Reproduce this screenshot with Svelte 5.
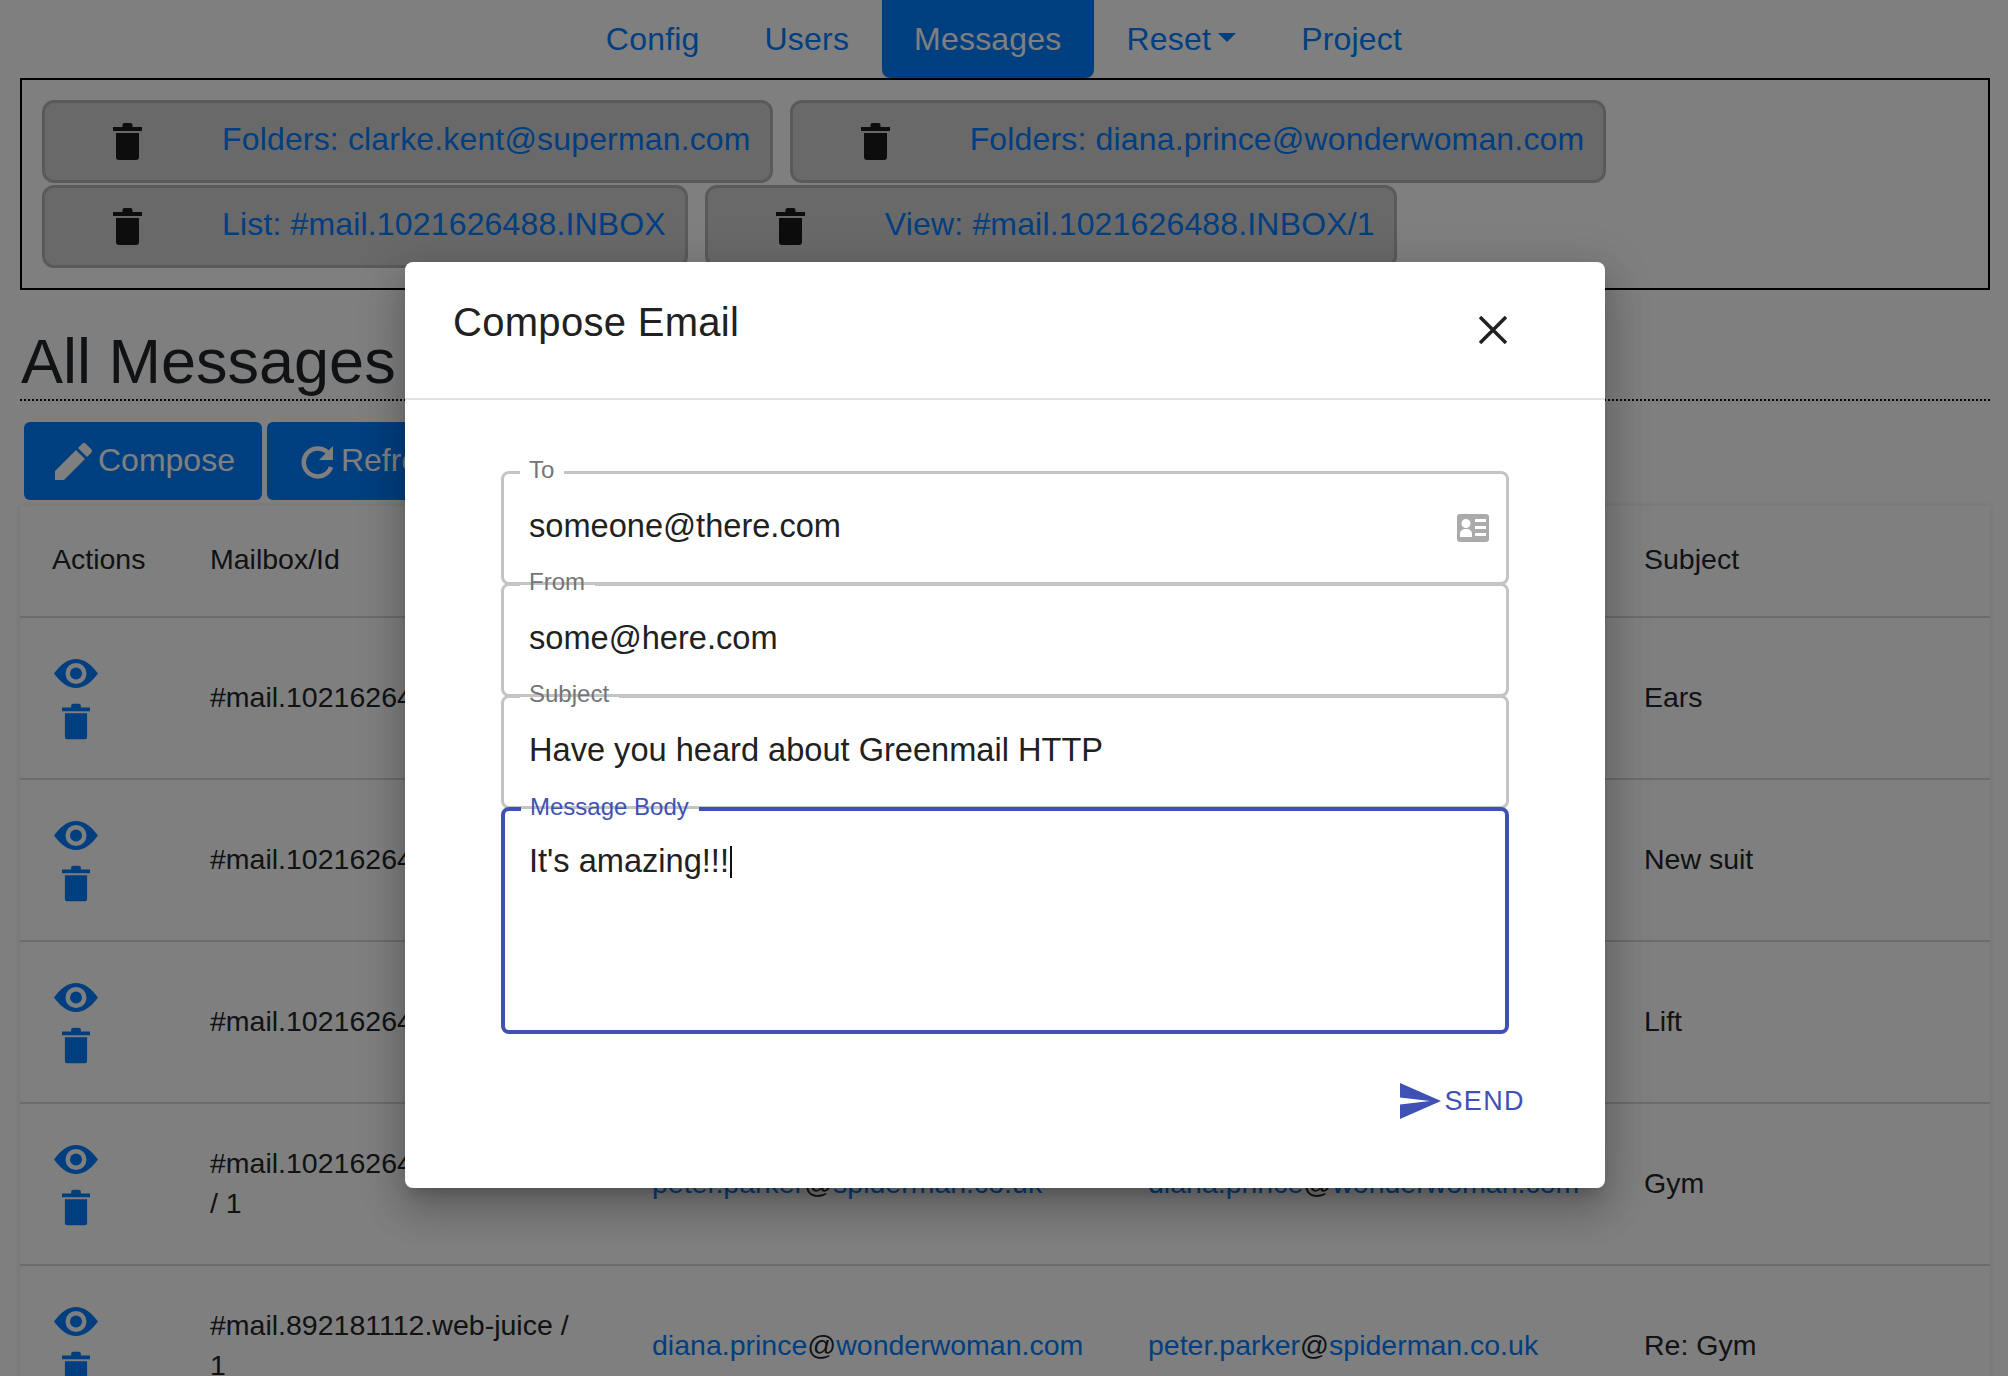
<script lang="ts">
	const tabs = [
		'Folders: clarke.kent@superman.com',
		'Folders: diana.prince@wonderwoman.com',
		'List: #mail.1021626488.INBOX',
		'View: #mail.1021626488.INBOX/1'
	];

	const peter = ['peter.parker', 'spiderman.co.uk'];
	const diana = ['diana.prince', 'wonderwoman.com'];
	const clarke = ['clarke.kent', 'superman.com'];

	const messages = [
		{ box: '#mail.1021626488.INBOX / 4', from: clarke, to: diana, subject: 'Ears' },
		{ box: '#mail.1021626488.INBOX / 3', from: clarke, to: diana, subject: 'New suit' },
		{ box: '#mail.1021626488.INBOX / 2', from: clarke, to: diana, subject: 'Lift' },
		{ box: '#mail.1021626488.web-juice / 1', from: peter, to: diana, subject: 'Gym' },
		{ box: '#mail.892181112.web-juice / 1', from: diana, to: peter, subject: 'Re: Gym' }
	];
</script>

{#snippet trash()}
	<svg class="trash" viewBox="0 0 29 37">
		<path d="M0 4h9.500V2a2 2 0 0 1 2-2h6a2 2 0 0 1 2 2v2H29v4H0z" />
		<path d="M3 10h23v24a3 3 0 0 1-3 3H6a3 3 0 0 1-3-3z" />
	</svg>
{/snippet}

{#snippet email(parts: string[])}
	<a href="#top" class="mail">{parts[0]}<span class="at">@</span>{parts[1]}</a>
{/snippet}

<div class="page">
	<nav class="nav">
		<a href="#top">Config</a>
		<a href="#top">Users</a>
		<a href="#top" class="active">Messages</a>
		<a href="#top" class="dropdown">Reset<span class="caret"></span></a>
		<a href="#top">Project</a>
	</nav>

	<div class="tabs">
		{#each tabs as tab}
			<div class="tab">
				{@render trash()}
				<a href="#top">{tab}</a>
			</div>
		{/each}
	</div>

	<h1>All Messages</h1>

	<div class="toolbar">
		<button class="btn">
			<svg class="btn-icon" viewBox="0 0 37 37">
				<path d="M0 37v-9L21 7l9 9L9 37z" />
				<path d="M23 5l4-4a3 3 0 0 1 4 0l5 5a3 3 0 0 1 0 4l-4 4z" />
			</svg>
			Compose
		</button>
		<button class="btn">
			<svg class="btn-icon" viewBox="0 0 37 37">
				<path d="M31 11A14 14 0 1 0 33 24" fill="none" stroke="currentColor" stroke-width="4.500" />
				<path d="M35 3v14H21z" />
			</svg>
			Refresh
		</button>
	</div>

	<table class="messages">
		<colgroup>
			<col style="width: 158px" />
			<col style="width: 442px" />
			<col style="width: 496px" />
			<col style="width: 496px" />
			<col />
		</colgroup>
		<thead>
			<tr>
				<th>Actions</th>
				<th>Mailbox/Id</th>
				<th>From</th>
				<th>To</th>
				<th>Subject</th>
			</tr>
		</thead>
		<tbody>
			{#each messages as msg}
				<tr>
					<td class="actions">
						<svg class="eye" viewBox="0 0 44 29">
							<path fill-rule="evenodd" d="M0 14.500C7 5 14 0 22 0s15 5 22 14.500C37 24 30 29 22 29S7 24 0 14.500zM22 4a10.500 10.500 0 1 0 0 21 10.500 10.500 0 0 0 0-21z" />
							<circle cx="22" cy="14.500" r="6" />
						</svg>
						{@render trash()}
					</td>
					<td>{msg.box}</td>
					<td>{@render email(msg.from)}</td>
					<td>{@render email(msg.to)}</td>
					<td>{msg.subject}</td>
				</tr>
			{/each}
		</tbody>
	</table>

	<div class="overlay">
		<div class="dialog">
			<header class="dialog-head">
				<h2>Compose Email</h2>
				<svg class="close" viewBox="0 0 28 28">
					<path d="M1 1l26 26M27 1L1 27" stroke="currentColor" stroke-width="3.500" fill="none" />
				</svg>
			</header>
			<div class="dialog-body">
				<fieldset class="field">
					<legend>To</legend>
					<input type="text" value="someone@there.com" />
					<svg class="card" viewBox="0 0 32 28">
						<path fill-rule="evenodd" d="M3 0h26a3 3 0 0 1 3 3v22a3 3 0 0 1-3 3H3a3 3 0 0 1-3-3V3a3 3 0 0 1 3-3zM18 5v3h11V5zM18 12v3h11v-3zM18 19v3h11v-3zM9 5a4.500 4.500 0 1 0 0 9 4.500 4.500 0 0 0 0-9zM3 23h12v-3c0-3-2-5-6-5s-6 2-6 5z" />
					</svg>
				</fieldset>
				<fieldset class="field">
					<legend>From</legend>
					<input type="text" value="some@here.com" />
				</fieldset>
				<fieldset class="field">
					<legend>Subject</legend>
					<input type="text" value="Have you heard about Greenmail HTTP" />
				</fieldset>
				<fieldset class="field focused">
					<legend>Message Body</legend>
					<div class="body-text">It's amazing!!!<span class="cursor"></span></div>
				</fieldset>
				<div class="dialog-actions">
					<button class="send">
						<svg class="send-icon" viewBox="0 0 41 36">
							<path d="M0 0l41 18L0 36V21.500L30 18 0 14.500z" />
						</svg>
						SEND
					</button>
				</div>
			</div>
		</div>
	</div>
</div>

<style>
	:global(body) {
		margin: 0;
		background: #fff;
	}

	.page {
		position: relative;
		height: 1376px;
		overflow: hidden;
		font-family: "Liberation Sans", Arial, sans-serif;
		color: #212529;
	}

	a {
		color: #007eff;
		text-decoration: none;
	}

	.nav {
		display: flex;
		justify-content: center;
		font-size: 32px;
		letter-spacing: 0.2px;
	}

	.nav a {
		display: flex;
		align-items: center;
		height: 78px;
		padding: 0 32.500px;
		border-radius: 0 0 8px 8px;
	}

	.nav a.active {
		background: #007eff;
		color: #fff;
	}

	.caret {
		width: 0;
		height: 0;
		margin-left: 7px;
		margin-bottom: 4px;
		border-top: 9px solid currentColor;
		border-left: 9px solid transparent;
		border-right: 9px solid transparent;
	}

	.tabs {
		display: flex;
		flex-wrap: wrap;
		align-content: flex-start;
		column-gap: 17px;
		row-gap: 2px;
		box-sizing: border-box;
		height: 212px;
		margin: 0 18px 0 20px;
		padding: 20px;
		border: 2px solid #000;
	}

	.tab {
		display: flex;
		align-items: center;
		gap: 80px;
		box-sizing: border-box;
		height: 83px;
		padding: 0 19px 5px 68px;
		background: #d3d3d3;
		border: 3px solid #b4b4b4;
		border-radius: 12px;
		font-size: 32px;
		letter-spacing: 0.16px;
	}

	.trash {
		flex: none;
		width: 29px;
		height: 37px;
		fill: currentColor;
	}

	.tab .trash {
		color: #1a1a1a;
		margin-top: 5px;
	}

	h1 {
		margin: 0 18px 0 20px;
		height: 111px;
		box-sizing: border-box;
		padding: 36px 0 0 1px;
		border-bottom: 2px dotted #000;
		font-size: 63px;
		line-height: 70px;
		font-weight: 400;
	}

	.toolbar {
		display: flex;
		gap: 5px;
		margin: 21px 0 6px 24px;
	}

	.btn {
		display: flex;
		align-items: center;
		gap: 6px;
		height: 78px;
		padding: 0 27px 2px 31px;
		background: #007eff;
		color: #fff;
		border: 0;
		border-radius: 6px;
		font: inherit;
		font-size: 32px;
	}

	.btn-icon {
		width: 37px;
		height: 37px;
		margin-top: 2px;
		fill: currentColor;
	}

	.messages {
		width: 1970px;
		margin-left: 20px;
		table-layout: fixed;
		border-collapse: collapse;
		box-shadow: 0 0 6px rgba(0, 0, 0, 0.12);
		font-size: 28.500px;
		line-height: 40px;
	}

	th {
		height: 105px;
		padding: 0 32px 5px;
		text-align: left;
		font-weight: 400;
	}

	td {
		height: 158px;
		padding: 0 32px 2px;
		border-top: 2px solid #d8d8d8;
		vertical-align: middle;
	}

	.mail {
		display: inline-block;
	}

	.at {
		color: #212529;
	}

	td.actions {
		padding: 2px 32px 0;
	}

	.actions .eye,
	.actions .trash {
		display: block;
		fill: #007eff;
	}

	.eye {
		width: 44px;
		height: 29px;
		margin: 0 0 15px 2px;
	}

	.actions .trash {
		width: 28px;
		margin-left: 10px;
	}

	.overlay {
		position: absolute;
		inset: 0;
		display: flex;
		justify-content: center;
		align-items: flex-start;
		padding: 262px 0 0 2px;
		background: rgba(0, 0, 0, 0.5);
	}

	.dialog {
		width: 1200px;
		height: 926px;
		background: #fff;
		border-radius: 8px;
		box-shadow:
			0 11px 15px -7px rgba(0, 0, 0, 0.2),
			0 24px 38px 3px rgba(0, 0, 0, 0.14),
			0 9px 46px 8px rgba(0, 0, 0, 0.12);
	}

	.dialog-head {
		display: flex;
		justify-content: space-between;
		box-sizing: border-box;
		height: 138px;
		padding: 37px 98px 0 48px;
		border-bottom: 2px solid #e2e2e2;
	}

	h2 {
		margin: 0;
		font-size: 40px;
		line-height: 46px;
		font-weight: 400;
		letter-spacing: 0.3px;
		color: #212121;
	}

	.close {
		width: 28px;
		height: 28px;
		margin-top: 17px;
		color: #212121;
	}

	.dialog-body {
		padding: 58px 96px 0;
	}

	.field {
		position: relative;
		box-sizing: border-box;
		height: 127px;
		margin: -15px 0 0;
		padding: 0 21px;
		border: 3px solid #c4c4c4;
		border-radius: 8px;
	}

	.field:first-child {
		margin-top: 0;
	}

	legend {
		margin-left: -5px;
		padding: 0 10px 0 9px;
		font-size: 24px;
		line-height: 28px;
		color: #757575;
		transform: translateY(-2px);
	}

	input {
		display: block;
		box-sizing: border-box;
		width: 100%;
		height: 80px;
		margin-top: 0;
		padding: 0 0 0 4px;
		border: 0;
		outline: 0;
		background: none;
		font: inherit;
		font-size: 32.600px;
		color: #212121;
	}

	.card {
		position: absolute;
		right: 17px;
		top: 28px;
		width: 32px;
		height: 28px;
		fill: #aaa;
	}

	.focused {
		height: 239px;
		margin-top: -14px;
		border: 4px solid #3f51b5;
	}

	.focused legend {
		color: #3f51b5;
	}

	.body-text {
		margin-top: 15px;
		padding-left: 3px;
		font-size: 32.600px;
		line-height: 46px;
		color: #212121;
	}

	.cursor {
		display: inline-block;
		width: 2px;
		height: 32px;
		margin-left: 1px;
		vertical-align: -6px;
		background: #111;
	}

	.dialog-actions {
		display: flex;
		justify-content: flex-end;
		margin-top: 49px;
		margin-right: -16px;
	}

	.send {
		display: flex;
		align-items: center;
		gap: 3px;
		padding: 0;
		border: 0;
		background: none;
		color: #3f51b5;
		font: inherit;
		font-size: 27px;
		letter-spacing: 1.4px;
	}

	.send-icon {
		width: 41px;
		height: 36px;
		fill: currentColor;
	}
</style>
